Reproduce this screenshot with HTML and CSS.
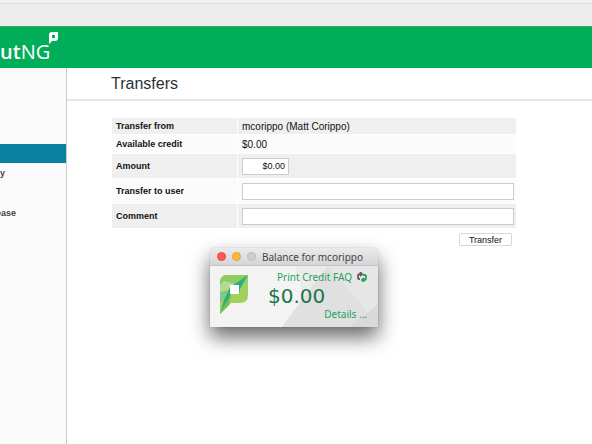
FILE: index.html
```html
<!DOCTYPE html>
<html lang="en">
<head>
  <meta charset="UTF-8" />
  <meta name="viewport" content="width=device-width, initial-scale=1.0"/>
  <title>Transfers</title>
  <link rel="stylesheet" href="styles.css">
</head>
<body>
  <div class="toolbar"></div>

  <header class="header">
    <div class="logo"><b>ut</b>NG</div>
    <svg class="logo-mark" width="10" height="12" viewBox="0 0 10 12">
      <path fill="#fff" fill-rule="evenodd" d="M3 0H9V6Q9 9 6 9H3L0 12V3Q0 0 3 0ZM3 3V6H6V3Z"/>
    </svg>
  </header>

  <div class="page">
    <nav class="sidebar">
      <a href="#" class="active" aria-label="Transfers"></a>
      <a href="#">y</a>
      <a href="#" aria-label="Jobs"></a>
      <a href="#" class="long">ease</a>
    </nav>

    <main class="content">
      <h1>Transfers</h1>

      <form class="transfer-form">
        <table>
          <tr>
            <th>Transfer from</th>
            <td>mcorippo (Matt Corippo)</td>
          </tr>
          <tr class="credit">
            <th>Available credit</th>
            <td>$0.00</td>
          </tr>
          <tr class="field">
            <th><label for="amount">Amount</label></th>
            <td><input type="text" id="amount" class="amount" value="$0.00"></td>
          </tr>
          <tr class="field">
            <th><label for="user">Transfer to user</label></th>
            <td><input type="text" id="user"></td>
          </tr>
          <tr class="field">
            <th><label for="comment">Comment</label></th>
            <td><input type="text" id="comment"></td>
          </tr>
        </table>
        <button type="button" class="submit">Transfer</button>
      </form>
    </main>
  </div>

  <!-- floating balance window -->
  <section class="balance">
    <div class="titlebar">
      <button type="button" class="dot red" aria-label="Close"></button>
      <button type="button" class="dot yellow" aria-label="Minimize"></button>
      <button type="button" class="dot" aria-label="Zoom"></button>
      <span class="title">Balance for mcorippo</span>
    </div>
    <div class="balance-body">
      <svg class="facets" viewBox="0 0 168 61" preserveAspectRatio="none">
        <path fill="#ebebeb" d="M85 0H168V61H72L94 31Z"/>
        <path fill="#e0e0e0" d="M118 0L158 46L140 61H72L94 31Z"/>
        <path fill="#e6e6e6" d="M118 0H168V38L158 46Z"/>
        <path fill="#d9d9d9" d="M168 38V61H140Z"/>
      </svg>
      <svg class="brand" width="28" height="39" viewBox="0 0 28 39">
        <path fill="#a3d05a" d="M7 0H28V20Q28 28 20 28H11L0 39V8Q0 0 7 0Z"/>
        <path fill="#8fcb62" d="M7 0H28L10 13L0 10V8Q0 0 7 0Z"/>
        <path fill="#b5d99b" d="M0 10L4 6L16 9L10 14L0 17Z"/>
        <path fill="#7fc890" d="M0 17L9 16V22L0 27Z"/>
        <path fill="#2bb07a" d="M28 0L20 14L19 19H11L8 26L0 39L4 25L7 19L10 12Z"/>
        <path fill="#6fc250" d="M11 20L9 30L0 39L3 32Z"/>
        <path fill="#fff" d="M10 10H19V19H10Z"/>
      </svg>
      <div class="figures">
        <div class="faq">
          <a href="#">Print Credit FAQ</a>
          <svg width="10" height="10" viewBox="0 0 10 10" fill="none" stroke-width="1.8">
            <path stroke="#6b5660" d="M3 7H2Q1 7 1 6V4Q1 2 3 2H5M3 0L5 2L3 4"/>
            <path stroke="#24a25b" d="M6 3H8Q9 3 9 4V6Q9 8 7 8H5M7 6L5 8L7 10"/>
          </svg>
        </div>
        <div class="sum">$0.00</div>
        <a href="#" class="details">Details ...</a>
      </div>
    </div>
  </section>
</body>
</html>
```
FILE: styles.css
```css
* {
  box-sizing: border-box;
}

body {
  margin: 0;
  min-height: 100vh;
  display: flex;
  flex-direction: column;
  font-family: "Liberation Sans", Arial, sans-serif;
  font-size: 9px;
  color: #111;
  background: #fff;
  overflow: hidden;
}

a {
  text-decoration: none;
}

.toolbar {
  height: 26px;
  background: linear-gradient(#f3f3f3 3px, #dcdcdc 3px, #dcdcdc 4px, #ededed 4px);
}

.header {
  display: flex;
  align-items: flex-start;
  height: 42px;
  padding-top: 5px;
  background: #00ad59;
  border-top: 1px solid #4a9a6c;
}

.logo {
  padding-top: 8px;
  font-family: "Open Sans", sans-serif;
  font-size: 20px;
  line-height: 24px;
  color: #fff;
}

.logo b {
  font-weight: 600;
}

.logo-mark {
  margin-left: -1px;
}

.page {
  flex: 1;
  display: flex;
}

.sidebar {
  width: 67px;
  padding-top: 76px;
  background: #fafafa;
  border-right: 1px solid #ccc;
}

.sidebar a {
  display: block;
  height: 20px;
  line-height: 20px;
  font-weight: bold;
  color: #444;
}

/* long label, runs off the left edge */
.sidebar .long {
  margin-left: -4px;
}

.sidebar .active {
  height: 19px;
  background: #0c809f;
}

.content {
  flex: 1;
}

h1 {
  margin: 0;
  padding: 0 44px;
  height: 33px;
  line-height: 31px;
  font-size: 16px;
  font-weight: normal;
  color: #2d3038;
  border-bottom: 2px solid #e4e4e4;
}

.transfer-form {
  padding: 16px 75px 0 44px;
}

table {
  width: 100%;
  border-spacing: 1px;
}

th, td {
  height: 16px;
  padding: 0 2px 0 4px;
  text-align: left;
  background: #fbfbfb;
}

th {
  width: 125px;
}

tr:nth-child(odd) th,
tr:nth-child(odd) td {
  background: #efefef;
}

.credit th, .credit td {
  height: 18px;
}

.field th, .field td {
  height: 24px;
}

td {
  font-size: 10px;
}

td input {
  display: block;
  width: 100%;
  height: 17px;
  padding: 0 3px;
  font: inherit;
  color: #111;
  border: 1px solid #ccc;
  background: #fff;
}

td .amount {
  width: 47px;
  font-size: 9px;
  text-align: right;
}

.submit {
  display: block;
  width: 53px;
  height: 13px;
  margin: 4px 5px 0 auto;
  padding: 0;
  font: inherit;
  color: #111;
  background: #fff;
  border: 1px solid #d8d8d8;
  border-radius: 2px;
}

.balance {
  position: absolute;
  left: 210px;
  top: 248px;
  width: 168px;
  border-radius: 4px 4px 0 0;
  font-family: "Noto Sans", sans-serif;
  font-size: 10px;
  background: #f3f3f3;
  box-shadow: 0 0 1px rgba(0, 0, 0, 0.4), 0 10px 20px rgba(0, 0, 0, 0.6);
}

.titlebar {
  display: flex;
  align-items: center;
  gap: 6px;
  height: 18px;
  padding: 0 7px;
  border-radius: 4px 4px 0 0;
  border-bottom: 1px solid #c4c4c4;
  background: linear-gradient(#ebebeb, #d5d5d5);
}

.dot {
  width: 9px;
  height: 9px;
  padding: 0;
  border: 1px solid #bbb;
  border-radius: 50%;
  background: #cfcfcf;
}

.dot.red {
  background: #fb5a54;
  border-color: #e2443f;
}

.dot.yellow {
  background: #fdb835;
  border-color: #e0a02d;
}

.title {
  color: #444;
  white-space: nowrap;
}

.balance-body {
  position: relative;
  display: flex;
  justify-content: space-between;
  height: 61px;
  padding: 3px 11px 0 10px;
}

.facets {
  position: absolute;
  inset: 0;
  width: 100%;
  height: 100%;
}

.brand,
.figures {
  position: relative;
}

.brand {
  margin-top: 6px;
}

.figures {
  display: flex;
  flex-direction: column;
  width: 99px;
}

.figures a {
  color: #24a25b;
}

.faq {
  display: flex;
  align-items: center;
  justify-content: flex-end;
  gap: 5px;
  height: 15px;
  white-space: nowrap;
}

.sum {
  font-family: "DejaVu Sans", sans-serif;
  font-size: 20px;
  line-height: 24px;
  color: #1c7548;
}

.figures .details {
  align-self: flex-end;
  line-height: 12px;
}
```
